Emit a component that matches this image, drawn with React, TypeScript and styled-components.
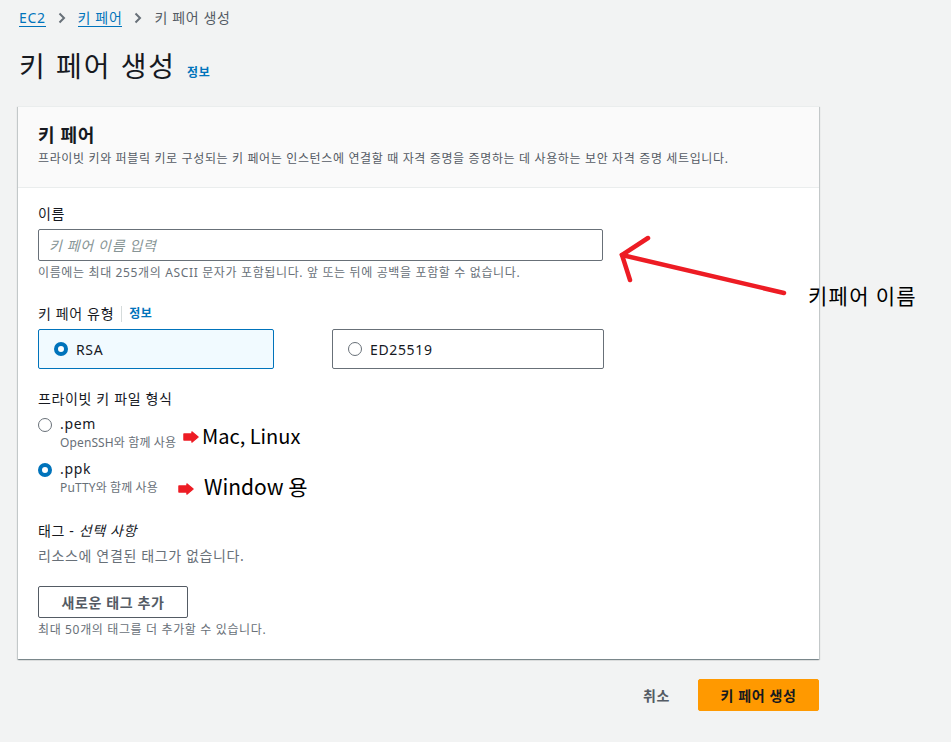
import * as React from 'react';
import styled, { createGlobalStyle } from 'styled-components';

const GlobalStyle = createGlobalStyle`
  html, body {
    margin: 0;
    padding: 0;
    background: #f2f3f3;
  }
  body {
    font-family: "Noto Sans", "Noto Sans CJK KR", sans-serif;
    color: #16191f;
    letter-spacing: 0.04em;
  }
`;

const Page = styled.div`
  position: relative;
  width: 951px;
  height: 742px;
  box-sizing: border-box;
  padding: 8px 18px 0 19px;
  overflow: hidden;
`;

const Breadcrumbs = styled.nav`
  display: flex;
  align-items: center;
  gap: 11px;
  font-size: 14px;
  line-height: 20px;
  color: #545b64;
`;

const Crumb = styled.a`
  color: #0073bb;
  text-decoration: none;
  border-bottom: 1px solid #0073bb;
  line-height: 17px;
`;

const Chevron = () => (
  <svg width="10" height="12" viewBox="0 0 10 12">
    <path d="M2.5 1.5 L7 6 L2.5 10.5" fill="none" stroke="#687078" strokeWidth="2" />
  </svg>
);

const TitleRow = styled.div`
  display: flex;
  align-items: baseline;
  gap: 11px;
  margin-top: 18px;
  height: 60px;
`;

const Title = styled.h1`
  margin: 0;
  font-size: 28px;
  font-weight: 400;
  line-height: 40px;
  letter-spacing: 0.07em;
`;

const InfoLink = styled.a`
  color: #0073bb;
  font-size: 12px;
  font-weight: 700;
  text-decoration: none;
`;

const Card = styled.section`
  width: 801px;
  margin-left: -1px;
  background: #fff;
  box-shadow: 0 1px 1px 0 rgba(0, 28, 36, 0.3), 1px 1px 1px 0 rgba(0, 28, 36, 0.15), -1px 1px 1px 0 rgba(0, 28, 36, 0.15);
  border-top: 1px solid #eaeded;
`;

const CardHeader = styled.header`
  background: #fafafa;
  border-bottom: 1px solid #eaeded;
  padding: 15px 20px 20px;
`;

const CardTitle = styled.h2`
  margin: 0;
  font-size: 18px;
  font-weight: 700;
  line-height: 26px;
`;

const CardDesc = styled.p`
  margin: 3px 0 0;
  font-size: 12px;
  line-height: 16px;
  color: #545b64;
`;

const CardBody = styled.div`
  padding: 15px 20px 21px;
  display: flex;
  flex-direction: column;
`;

const Field = styled.div<{ $gap?: number }>`
  display: flex;
  flex-direction: column;
  margin-bottom: ${({ $gap }) => $gap ?? 22}px;
`;

const Label = styled.div`
  display: flex;
  align-items: center;
  font-size: 14px;
  line-height: 22px;
  margin-bottom: 4px;
  em {
    font-style: italic;
  }
`;

const LabelInfo = styled.a`
  color: #0073bb;
  font-size: 12px;
  font-weight: 700;
  text-decoration: none;
  margin-left: 7px;
  padding-left: 7px;
  border-left: 1px solid #d5dbdb;
  line-height: 16px;
`;

const TextInput = styled.input`
  box-sizing: border-box;
  width: 565px;
  height: 32px;
  border: 1px solid #687078;
  border-radius: 2px;
  padding: 0 10px;
  font-family: inherit;
  font-size: 14px;
  letter-spacing: inherit;
  &::placeholder {
    color: #879596;
    font-style: italic;
  }
`;

const Hint = styled.div`
  font-size: 12px;
  line-height: 16px;
  color: #687078;
  margin-top: 4px;
`;

const Tiles = styled.div`
  display: flex;
  gap: 58px;
`;

const Tile = styled.div<{ $selected?: boolean; $width: number }>`
  box-sizing: border-box;
  width: ${({ $width }) => $width}px;
  height: 40px;
  display: flex;
  align-items: center;
  gap: 8px;
  padding: 0 15px;
  border: 1px solid ${({ $selected }) => ($selected ? '#0073bb' : '#687078')};
  border-radius: 2px;
  background: ${({ $selected }) => ($selected ? '#f1faff' : '#fff')};
  font-size: 14px;
`;

const RadioDot = styled.span<{ $checked?: boolean }>`
  box-sizing: border-box;
  flex-shrink: 0;
  width: 14px;
  height: 14px;
  border-radius: 50%;
  background: #fff;
  border: ${({ $checked }) => ($checked ? '4px solid #0073bb' : '1.5px solid #687078')};
`;

const RadioList = styled.div`
  display: flex;
  flex-direction: column;
  gap: 8px;
`;

const RadioItem = styled.div`
  display: flex;
  align-items: flex-start;
  gap: 8px;
  ${RadioDot} {
    margin-top: 4px;
  }
`;

const RadioText = styled.div`
  display: flex;
  flex-direction: column;
  font-size: 14px;
  line-height: 20px;
`;

const RadioDesc = styled.span`
  font-size: 12px;
  line-height: 17px;
  letter-spacing: 0.01em;
  color: #687078;
`;

const Muted = styled.div`
  font-size: 14px;
  line-height: 20px;
  color: #687078;
  margin-bottom: 20px;
`;

const SecondaryButton = styled.button`
  box-sizing: border-box;
  width: 150px;
  height: 32px;
  background: #fff;
  border: 1px solid #545b64;
  border-radius: 2px;
  font-family: inherit;
  font-size: 14px;
  font-weight: 700;
  letter-spacing: inherit;
  color: #545b64;
  padding: 0;
`;

const Footer = styled.div`
  width: 800px;
  display: flex;
  justify-content: flex-end;
  align-items: center;
  gap: 28px;
  margin-top: 20px;
`;

const LinkButton = styled.button`
  background: none;
  border: none;
  font-family: inherit;
  font-size: 14px;
  font-weight: 700;
  letter-spacing: inherit;
  color: #545b64;
  padding: 0;
`;

const PrimaryButton = styled.button`
  box-sizing: border-box;
  width: 121px;
  height: 32px;
  background: #ff9900;
  border: 1px solid #ff9900;
  border-radius: 2px;
  font-family: inherit;
  font-size: 14px;
  font-weight: 700;
  letter-spacing: inherit;
  color: #16191f;
  padding: 0;
`;

const Note = styled.div<{ $x: number; $y: number; $size: number; $spacing: number }>`
  position: absolute;
  left: ${({ $x }) => $x}px;
  top: ${({ $y }) => $y}px;
  font-family: "Noto Sans CJK KR", "Noto Sans", sans-serif;
  font-size: ${({ $size }) => $size}px;
  letter-spacing: ${({ $spacing }) => $spacing}em;
  color: #000;
  white-space: nowrap;
  line-height: 1;
`;

const Overlay = styled.svg`
  position: absolute;
  left: 0;
  top: 0;
  pointer-events: none;
`;

const SmallArrow = ({ x, y }: { x: number; y: number }) => (
  <path
    d={`M${x} ${y - 3} L${x + 8} ${y - 3} L${x + 8} ${y - 5} L${x + 14} ${y} L${x + 8} ${y + 5} L${x + 8} ${y + 3} L${x} ${y + 3} Z`}
    fill="#ed1c24"
    stroke="#ed1c24"
    strokeWidth="1.5"
    strokeLinejoin="round"
  />
);

export default function App() {
  return (
    <>
      <GlobalStyle />
      <Page>
        <Breadcrumbs>
          <Crumb href="#">EC2</Crumb>
          <Chevron />
          <Crumb href="#">키 페어</Crumb>
          <Chevron />
          <span>키 페어 생성</span>
        </Breadcrumbs>
        <TitleRow>
          <Title>키 페어 생성</Title>
          <InfoLink href="#">정보</InfoLink>
        </TitleRow>

        <Card>
          <CardHeader>
            <CardTitle>키 페어</CardTitle>
            <CardDesc>프라이빗 키와 퍼블릭 키로 구성되는 키 페어는 인스턴스에 연결할 때 자격 증명을 증명하는 데 사용하는 보안 자격 증명 세트입니다.</CardDesc>
          </CardHeader>
          <CardBody>
            <Field>
              <Label>이름</Label>
              <TextInput placeholder="키 페어 이름 입력" />
              <Hint>이름에는 최대 255개의 ASCII 문자가 포함됩니다. 앞 또는 뒤에 공백을 포함할 수 없습니다.</Hint>
            </Field>

            <Field $gap={19}>
              <Label>
                키 페어 유형<LabelInfo href="#">정보</LabelInfo>
              </Label>
              <Tiles>
                <Tile $selected $width={236}>
                  <RadioDot $checked />
                  RSA
                </Tile>
                <Tile $width={272}>
                  <RadioDot />
                  ED25519
                </Tile>
              </Tiles>
            </Field>

            <Field $gap={24}>
              <Label>프라이빗 키 파일 형식</Label>
              <RadioList>
                <RadioItem>
                  <RadioDot />
                  <RadioText>
                    .pem
                    <RadioDesc>OpenSSH와 함께 사용</RadioDesc>
                  </RadioText>
                </RadioItem>
                <RadioItem>
                  <RadioDot $checked />
                  <RadioText>
                    .ppk
                    <RadioDesc>PuTTY와 함께 사용</RadioDesc>
                  </RadioText>
                </RadioItem>
              </RadioList>
            </Field>

            <Field $gap={0}>
              <Label>
                태그 -&nbsp;<em>선택 사항</em>
              </Label>
              <Muted>리소스에 연결된 태그가 없습니다.</Muted>
              <SecondaryButton>새로운 태그 추가</SecondaryButton>
              <Hint>최대 50개의 태그를 더 추가할 수 있습니다.</Hint>
            </Field>
          </CardBody>
        </Card>

        <Footer>
          <LinkButton>취소</LinkButton>
          <PrimaryButton>키 페어 생성</PrimaryButton>
        </Footer>

        <Overlay width="951" height="742" viewBox="0 0 951 742">
          <g stroke="#ed1c24" strokeWidth="4.5" strokeLinecap="round" fill="none">
            <path d="M784 293 L622 255" />
            <path d="M648 238 L622 255 L630 280" />
          </g>
          <SmallArrow x={184} y={437} />
          <SmallArrow x={179} y={489} />
        </Overlay>
        <Note $x={808} $y={285} $size={21} $spacing={0.06}>키페어 이름</Note>
        <Note $x={202} $y={426} $size={20} $spacing={0}>Mac, Linux</Note>
        <Note $x={204} $y={476} $size={21} $spacing={0}>Window 용</Note>
      </Page>
    </>
  );
}
